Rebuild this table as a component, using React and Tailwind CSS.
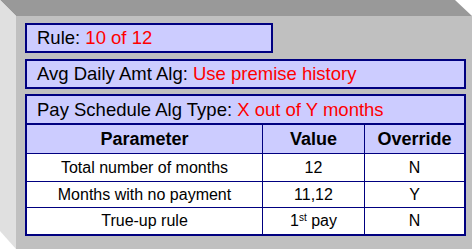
const rows = [
    { name: "Total number of months", value: "12", override: "N" },
    { name: "Months with no payment", value: "11,12", override: "Y" },
    { name: "True-up rule", value: "1st", override: "N", sup: true },
];

const rowHeights = ["h-[28px]", "h-[26px]", "h-[26px]"];

const LabelBox = ({ label, value, className = "" }) => (
    <div className={`h-[30px] border-2 border-[#000080] bg-[#ccccff] flex items-center pl-[10px] text-[18.5px] text-black ${className}`}>
        <span>{label}:&nbsp;</span>
        <span className="text-[#ff0000]">{value}</span>
    </div>
);

const App = () => {
    return (
        <div className="relative w-[473px] h-[249px] bg-white overflow-hidden" style={{ fontFamily: '"Liberation Sans", Arial, sans-serif' }}>
            {/* box bevels */}
            <svg className="absolute inset-0" width="473" height="249" viewBox="0 0 473 249">
                <polygon points="0,0 455,0 472,16 16,16" fill="#999999" />
                <polygon points="0,0 16,16 16,249 0,231" fill="#e0e0e0" />
            </svg>

            {/* front face */}
            <div className="relative ml-[16px] mt-[16px] w-[456px] h-[233px] bg-[#c0c0c0] pl-[9px] pt-[7px]">
                <LabelBox label="Rule" value="10 of 12" className="w-[248px]" />
                <LabelBox label="Avg Daily Amt Alg" value="Use premise history" className="w-[441px] mt-[6px]" />

                <div className="w-[441px] mt-[5px] border-2 border-[#000080]">
                    <div className="h-[29px] border-b-2 border-[#000080] bg-[#ccccff] flex items-center pl-[10px] text-[18.5px] text-black">
                        <span>Pay Schedule Alg Type:&nbsp;</span>
                        <span className="text-[#ff0000]">X out of Y months</span>
                    </div>

                    <div className="grid grid-cols-[236px_102px_1fr] bg-[#ccccff] border-b border-[#000080] h-[29px] text-[18px] font-bold text-black">
                        <div className="border-r border-[#000080] flex items-center justify-center">Parameter</div>
                        <div className="border-r border-[#000080] flex items-center justify-center">Value</div>
                        <div className="flex items-center justify-center">Override</div>
                    </div>

                    {rows.map((row, i) => (
                        <div
                            key={row.name}
                            className={`grid grid-cols-[236px_102px_1fr] bg-white text-[16px] text-black ${rowHeights[i]} ${i < rows.length - 1 ? "border-b border-[#000080]" : ""}`}
                        >
                            <div className="border-r border-[#000080] flex items-center justify-center">{row.name}</div>
                            <div className="border-r border-[#000080] flex items-center justify-center">
                                {row.sup ? (
                                    <span>1<sup className="text-[10px]">st</sup> pay</span>
                                ) : (
                                    row.value
                                )}
                            </div>
                            <div className="flex items-center justify-center">{row.override}</div>
                        </div>
                    ))}
                </div>
            </div>
        </div>
    );
};

export default App;
